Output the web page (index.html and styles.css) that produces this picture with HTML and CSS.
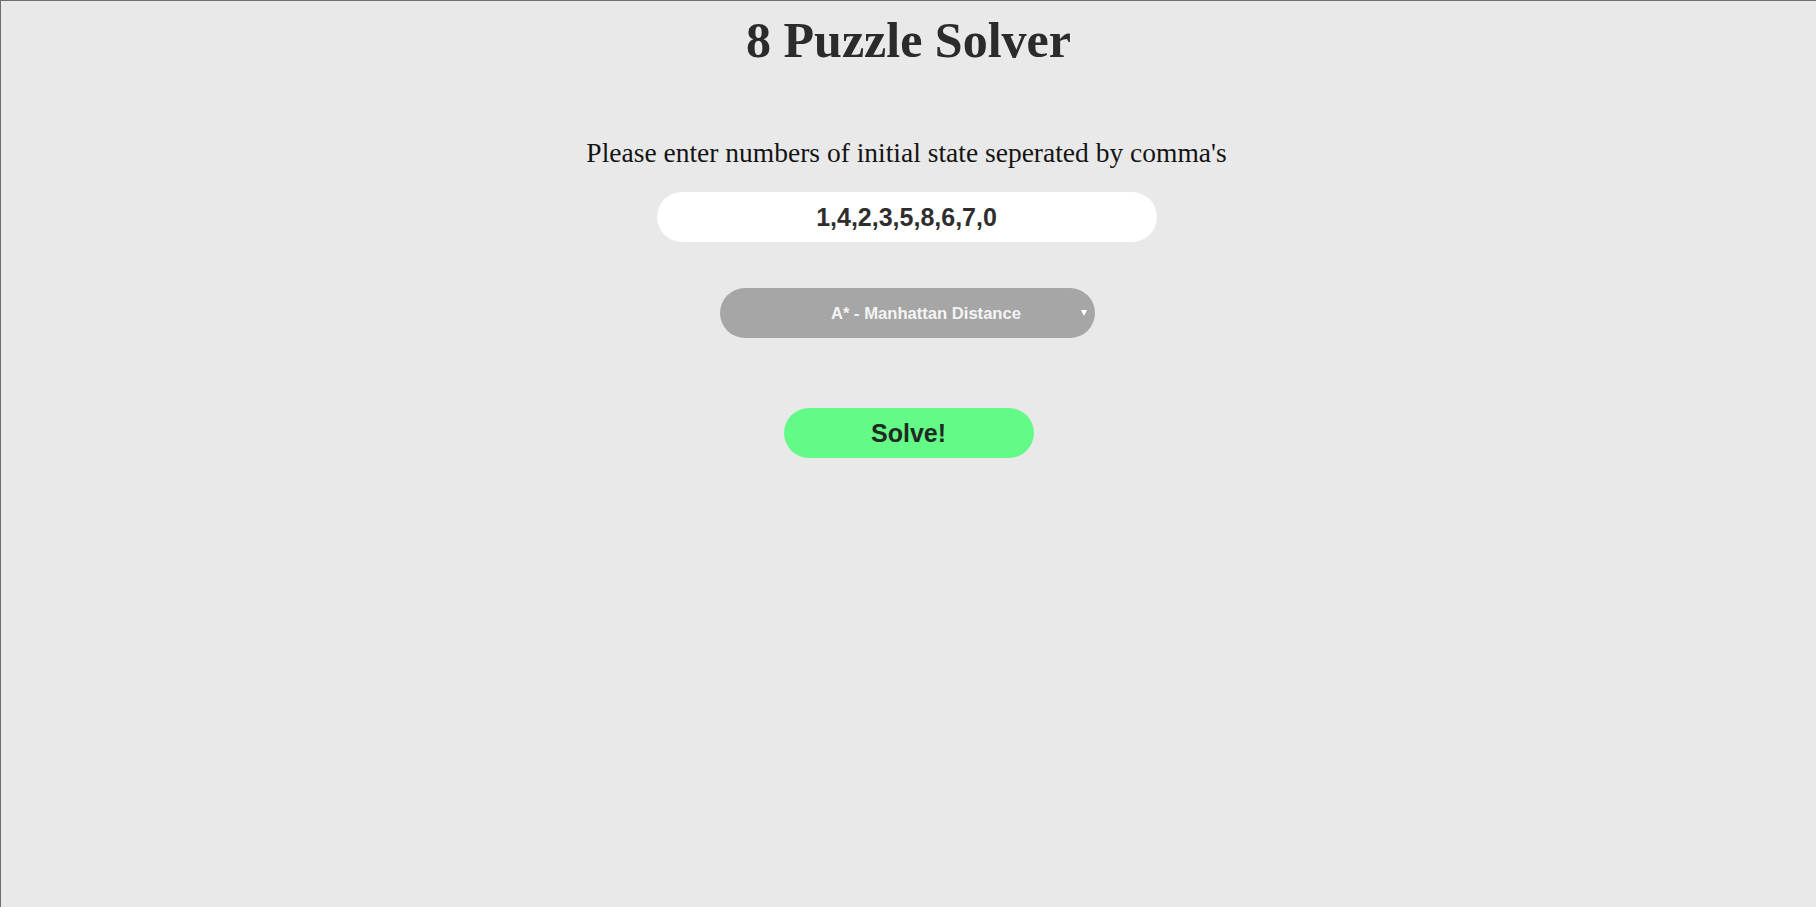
FILE: index.html
```html
<!DOCTYPE html>
<html lang="en">
<head>
<meta charset="utf-8">
<title>8 Puzzle Solver</title>
<link rel="stylesheet" href="styles.css">
</head>
<body>
<main class="page">
  <h1 class="title">8 Puzzle Solver</h1>
  <p class="prompt">Please enter numbers of initial state seperated by comma's</p>
  <input class="state-input" type="text" value="1,4,2,3,5,8,6,7,0">
  <div class="select-wrap">
    <select class="algo-select">
      <option>A* - Manhattan Distance</option>
      <option>A* - Euclidean Distance</option>
      <option>BFS</option>
      <option>DFS</option>
    </select>
  </div>
  <button class="solve-btn" type="button">Solve!</button>
</main>
</body>
</html>
```

FILE: styles.css
```css
html, body {
  margin: 0;
  padding: 0;
  height: 100%;
}

body {
  background: #e9e9e9;
  border-top: 1px solid #6e6e6e;
  border-left: 1px solid #6e6e6e;
  box-sizing: border-box;
  font-family: "Liberation Serif", "Times New Roman", serif;
}

.page {
  display: flex;
  flex-direction: column;
  align-items: center;
}

.title {
  margin: 10px 0 0;
  font-family: "Liberation Serif", "Times New Roman", serif;
  font-weight: bold;
  font-size: 50px;
  line-height: 58px;
  color: #2b2b2b;
}

.prompt {
  margin: 68px 4px 0 0;
  font-size: 27.5px;
  line-height: 32px;
  color: #141414;
}

.state-input {
  margin: 23px 4px 0 0;
  width: 500px;
  height: 50px;
  box-sizing: border-box;
  border: none;
  border-radius: 25px;
  background: #ffffff;
  outline: none;
  text-align: center;
  font-family: "Liberation Sans", Arial, sans-serif;
  font-weight: bold;
  font-size: 25px;
  color: #2e2e2e;
  padding: 0 16px;
}

.select-wrap {
  position: relative;
  margin: 46px 3px 0 0;
  width: 375px;
  height: 50px;
}

.algo-select {
  appearance: none;
  -webkit-appearance: none;
  width: 100%;
  height: 100%;
  border: none;
  border-radius: 25px;
  background: #a6a6a6;
  color: #f4f4f4;
  font-family: "Liberation Sans", Arial, sans-serif;
  font-weight: bold;
  font-size: 16.6px;
  text-align: center;
  text-align-last: center;
  padding: 0 0 0 38px;
  outline: none;
}

.select-wrap::after {
  content: "";
  position: absolute;
  right: 8px;
  top: 22px;
  width: 0;
  height: 0;
  border-left: 3.5px solid transparent;
  border-right: 3.5px solid transparent;
  border-top: 6px solid #ffffff;
  pointer-events: none;
}

.solve-btn {
  margin-top: 70px;
  width: 250px;
  height: 50px;
  border: none;
  border-radius: 25px;
  background: #64fa88;
  color: #1f2a22;
  font-family: "Liberation Sans", Arial, sans-serif;
  font-weight: bold;
  font-size: 25px;
  cursor: pointer;
}
```
